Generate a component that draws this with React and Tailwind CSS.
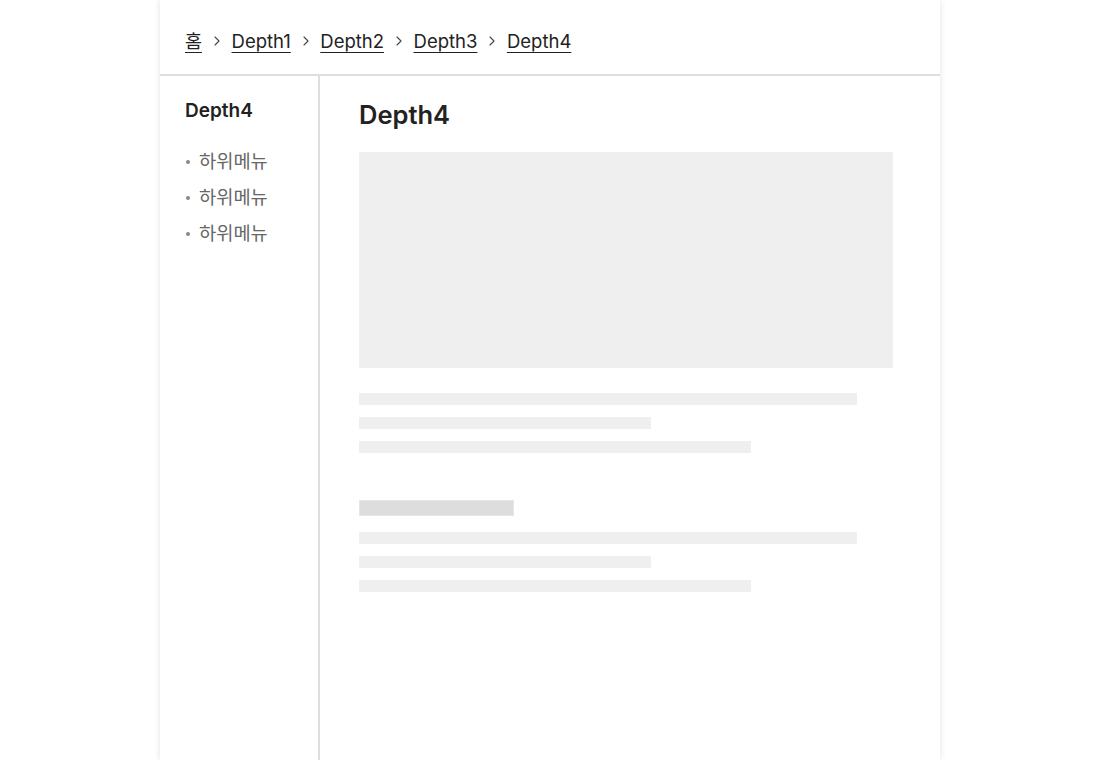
import React from 'react';
import { ChevronRight } from 'lucide-react';

const crumbs = ['홈', 'Depth1', 'Depth2', 'Depth3', 'Depth4'];

const TextLines = () => (
    <div className="flex flex-col gap-3">
        <div className="h-3 w-[498px] bg-[#efefef]" />
        <div className="h-3 w-[292px] bg-[#efefef]" />
        <div className="h-3 w-[392px] bg-[#efefef]" />
    </div>
);

const App = () => {
    return (
        <div className="min-h-screen bg-white font-[Inter,'Noto_Sans_CJK_KR',sans-serif] text-[#222]">
            <div className="mx-auto w-[780px] min-h-screen flex flex-col bg-white shadow-[0_0_6px_rgba(0,0,0,0.12)]">
                {/* breadcrumb */}
                <header className="h-[76px] shrink-0 border-b-2 border-[#dedede] flex items-start pl-[25px] pt-[29px]">
                    <nav className="flex items-center">
                        {crumbs.map((c, i) => (
                            <React.Fragment key={c}>
                                {i > 0 && <ChevronRight className="mx-[6.75px] w-4 h-4 text-[#444]" strokeWidth={1.6} />}
                                <a href="#" className="text-[18.5px] leading-6 underline underline-offset-[4px] decoration-1 text-[#222]">{c}</a>
                            </React.Fragment>
                        ))}
                    </nav>
                </header>

                <div className="flex flex-1">
                    {/* side menu */}
                    <aside className="w-[160px] shrink-0 border-r-2 border-[#dedede] pl-[25px] pt-[23px]">
                        <h2 className="text-[19px] font-semibold leading-6">Depth4</h2>
                        <ul className="mt-[27px] flex flex-col gap-[12px]">
                            {[0, 1, 2].map((i) => (
                                <li key={i} className="flex items-center text-[18.7px] leading-6 text-[#666]">
                                    <span className="w-[4px] h-[4px] rounded-full bg-[#888] ml-[1px] mr-[9px]" />
                                    하위메뉴
                                </li>
                            ))}
                        </ul>
                    </aside>

                    {/* content */}
                    <main className="flex-1 pl-[39px] pt-[23px]">
                        <h1 className="text-[25.5px] font-semibold leading-8">Depth4</h1>
                        <div className="mt-[21px] w-[534px] h-[216px] bg-[#efefef]" />
                        <div className="mt-[25px]">
                            <TextLines />
                        </div>
                        <div className="mt-[47px] w-[155px] h-4 bg-[#dddddd] border border-[#e6e6e6]" />
                        <div className="mt-4">
                            <TextLines />
                        </div>
                    </main>
                </div>
            </div>
        </div>
    );
};

export default App;
